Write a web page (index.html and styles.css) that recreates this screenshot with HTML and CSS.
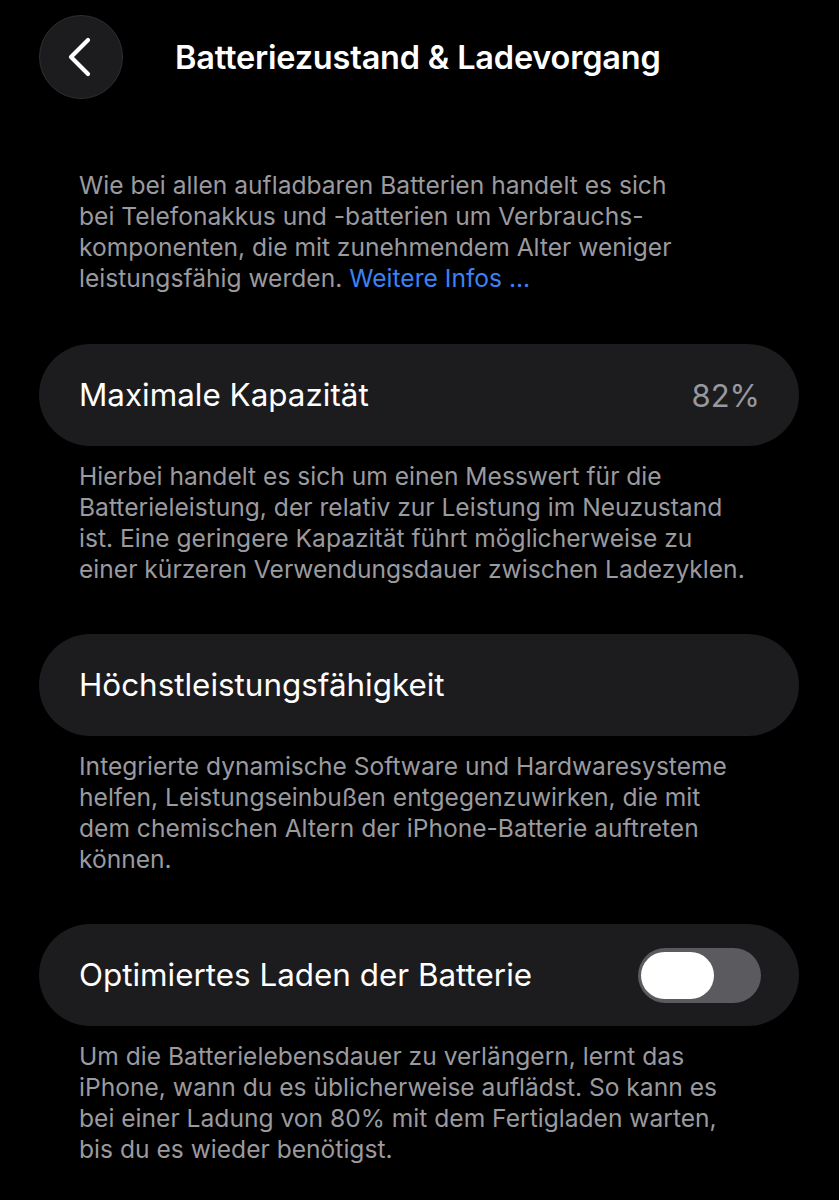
FILE: index.html
```html
<!DOCTYPE html>
<html lang="de">
<head>
<meta charset="utf-8">
<title>Batteriezustand &amp; Ladevorgang</title>
<link rel="stylesheet" href="styles.css">
</head>
<body>
<header class="nav">
  <button class="back" aria-label="Zurück">
    <svg width="26" height="40" viewBox="0 0 26 40"><path d="M22 3 L5 20 L22 37" fill="none" stroke="#fff" stroke-width="4.2" stroke-linecap="round" stroke-linejoin="round"/></svg>
  </button>
  <h1 class="title">Batteriezustand &amp; Ladevorgang</h1>
</header>
<main class="content">
  <p class="note first">Wie bei allen aufladbaren Batterien handelt es sich<br>bei Telefonakkus und -batterien um Verbrauchs-<br>komponenten, die mit zunehmendem Alter weniger<br>leistungsfähig werden. <span class="link">Weitere Infos ...</span></p>

  <div class="card">
    <span class="label">Maximale Kapazität</span>
    <span class="value">82%</span>
  </div>
  <p class="note">Hierbei handelt es sich um einen Messwert für die<br>Batterieleistung, der relativ zur Leistung im Neuzustand<br>ist. Eine geringere Kapazität führt möglicherweise zu<br>einer kürzeren Verwendungsdauer zwischen Ladezyklen.</p>

  <div class="card">
    <span class="label">Höchstleistungsfähigkeit</span>
  </div>
  <p class="note">Integrierte dynamische Software und Hardwaresysteme<br>helfen, Leistungseinbußen entgegenzuwirken, die mit<br>dem chemischen Altern der iPhone-Batterie auftreten<br>können.</p>

  <div class="card">
    <span class="label">Optimiertes Laden der Batterie</span>
    <span class="toggle"><span class="knob"></span></span>
  </div>
  <p class="note">Um die Batterielebensdauer zu verlängern, lernt das<br>iPhone, wann du es üblicherweise auflädst. So kann es<br>bei einer Ladung von 80% mit dem Fertigladen warten,<br>bis du es wieder benötigst.</p>
</main>
</body>
</html>
```

FILE: styles.css
```css
html, body {
  margin: 0;
  background: #000;
}
body {
  font-family: Inter, "Noto Sans", "Liberation Sans", sans-serif;
  color: #fff;
  padding: 15px 40px 0 39px;
}
.nav {
  display: flex;
  align-items: center;
  gap: 52px;
  height: 84px;
}
.back {
  width: 84px;
  height: 84px;
  border-radius: 50%;
  background: #1c1c1e;
  border: 1px solid #2e2e30;
  display: flex;
  align-items: center;
  justify-content: center;
  padding: 0 4px 0 0;
  flex: none;
}
.title {
  margin: 0;
  font-size: 32.5px;
  font-weight: 600;
  letter-spacing: -0.2px;
  white-space: nowrap;
}
.content {
  display: flex;
  flex-direction: column;
}
.note {
  margin: 0 0 49px;
  padding: 0 0 0 40px;
  font-size: 24.6px;
  line-height: 31px;
  color: #9a9a9f;
  white-space: nowrap;
}
.note.first {
  margin-top: 71px;
  margin-bottom: 50px;
}
.link {
  color: #3b82f6;
}
.card {
  height: 102px;
  border-radius: 51px;
  background: #1c1c1e;
  display: flex;
  align-items: center;
  justify-content: space-between;
  padding: 0 39px 0 40px;
  margin-bottom: 15px;
}
.label {
  font-size: 31.4px;
}
.value {
  font-size: 31px;
  color: #98989e;
}
.toggle {
  width: 123px;
  height: 55px;
  border-radius: 28px;
  background: #5a5a5f;
  display: flex;
  align-items: center;
  padding-left: 3px;
  box-sizing: border-box;
  margin-right: -1px;
}
.knob {
  width: 73px;
  height: 47px;
  border-radius: 24px;
  background: #fff;
}
```
